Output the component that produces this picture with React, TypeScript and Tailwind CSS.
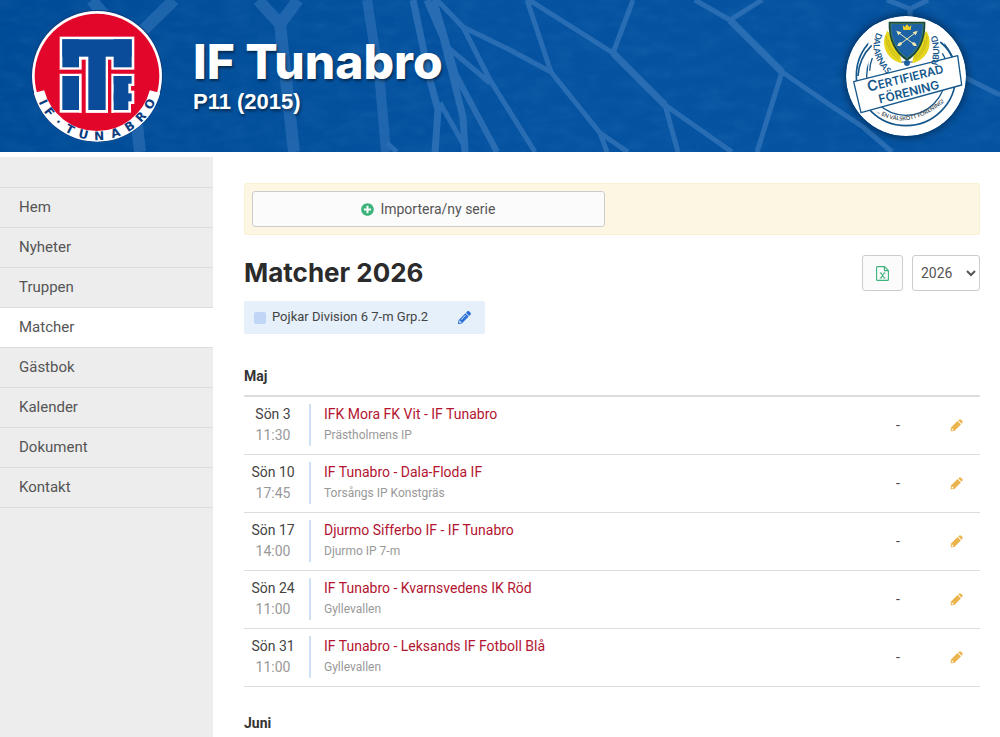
import { useState } from 'react';
import { FaPencilAlt, FaPlusCircle } from 'react-icons/fa';

const menu = ['Hem', 'Nyheter', 'Truppen', 'Matcher', 'Gästbok', 'Kalender', 'Dokument', 'Kontakt'];

const matches = [
  { day: 'Sön 3', time: '11:30', teams: 'IFK Mora FK Vit - IF Tunabro', place: 'Prästholmens IP' },
  { day: 'Sön 10', time: '17:45', teams: 'IF Tunabro - Dala-Floda IF', place: 'Torsångs IP Konstgräs' },
  { day: 'Sön 17', time: '14:00', teams: 'Djurmo Sifferbo IF - IF Tunabro', place: 'Djurmo IP 7-m' },
  { day: 'Sön 24', time: '11:00', teams: 'IF Tunabro - Kvarnsvedens IK Röd', place: 'Gyllevallen' },
  { day: 'Sön 31', time: '11:00', teams: 'IF Tunabro - Leksands IF Fotboll Blå', place: 'Gyllevallen' },
];

// Letters round the lower edge of the crest: [letter, rotation in degrees]
const crestLetters: [string, number][] = [
  ['I', 64], ['F', 53], ['·', 40], ['T', 27], ['U', 13], ['N', -2], ['A', -18], ['B', -33], ['R', -47], ['O', -62],
];

function NetBackground() {
  return (
    <svg className="absolute inset-0 h-full w-full" viewBox="0 0 1000 152" preserveAspectRatio="xMidYMid slice" aria-hidden="true">
      <defs>
        <linearGradient id="sky" x1="0" x2="1" y1="0" y2="0">
          <stop offset="0" stopColor="#004b96" />
          <stop offset="0.5" stopColor="#0452a0" />
          <stop offset="1" stopColor="#0452a0" />
        </linearGradient>
        <filter id="cloth" x="0" y="0" width="100%" height="100%">
          <feTurbulence type="fractalNoise" baseFrequency="0.04 0.09" numOctaves="3" seed="4" />
          <feColorMatrix values="0 0 0 0 0.2  0 0 0 0 0.5  0 0 0 0 0.8  0.9 0 0 0 -0.3" />
        </filter>
      </defs>
      <rect width="1000" height="152" fill="url(#sky)" />
      <rect width="1000" height="152" filter="url(#cloth)" opacity="0.15" />
      <g fill="none" stroke="#2f72b7" strokeLinejoin="round" opacity="0.85">
        <g strokeWidth="12" opacity="0.75">
          <path d="M92 0 128 45 140 152M174 0 128 45" />
          <path d="M258 0 280 24 286 80 294 152M298 0 280 24" />
          <path d="M367 0 380 83 386 152" strokeWidth="10" />
        </g>
        <g strokeWidth="7">
          <path d="M413 0 430 80 438 110 435 152" />
          <path d="M427 0 443 37 463 117 465 152" />
          <path d="M434 0 456 75 497 152" strokeWidth="6" />
          <path d="M387 143 397 152M440 103 465 147" strokeWidth="5" />
        </g>
        <g strokeWidth="5">
          <path d="M437 0 463 27 510 50 551 72 600 133 628 152M600 133 607 152" />
          <path d="M463 27 490 80 535 152M445 45 490 83" />
          <path d="M527 0 551 72M529 0 613 53 665 105 732 152M665 105 678 152M633 0 613 53" />
          <path d="M695 0 730 20 782 72 830 105 863 127 892 152M762 0 730 20M782 72 757 152" />
          <path d="M887 0 910 9 928 0M910 9 910 24M960 75 1000 95" />
        </g>
        <path d="M613 53 665 105M730 20 782 72" strokeWidth="7" />
      </g>
    </svg>
  );
}

function ClubCrest() {
  return (
    <svg className="h-[134px] w-[134px] shrink-0" viewBox="89 27 402 402" role="img" aria-label="IF Tunabro">
      <circle cx="290" cy="228" r="198" fill="#0d3c7e" />
      <circle cx="290" cy="228" r="195" fill="#fff" />
      <circle cx="290" cy="228" r="187" fill="#e3062b" />
      <path d="M116 275A180 180 0 0 0 464 275" fill="none" stroke="#fff" strokeWidth="32" />
      <g fill="#fff">
        <rect x="178" y="110" width="224" height="100" />
        <rect x="178" y="220" width="162" height="118" />
        <rect x="332" y="220" width="70" height="38" />
        <rect x="332" y="250" width="60" height="88" />
        <rect x="332" y="272" width="70" height="40" />
        <rect x="236" y="170" width="104" height="168" />
      </g>
      <g fill="#0a4c9a">
        <rect x="186" y="118" width="208" height="52" />
        <rect x="186" y="118" width="50" height="84" />
        <rect x="340" y="118" width="54" height="84" />
        <rect x="186" y="228" width="50" height="102" />
        <rect x="264" y="160" width="52" height="170" />
        <rect x="340" y="228" width="54" height="23" />
        <rect x="340" y="228" width="44" height="102" />
        <rect x="340" y="280" width="54" height="24" />
      </g>
      <g fill="#e3062b">
        <rect x="244" y="179" width="12" height="160" />
        <rect x="323" y="179" width="10" height="160" />
        <rect x="178" y="209" width="70" height="12" />
        <rect x="330" y="209" width="73" height="12" />
      </g>
      <g fill="#0d3c7e" fontFamily="'DejaVu Sans', sans-serif" fontWeight="700" fontSize="36" textAnchor="middle">
        {crestLetters.map(([letter, angle]) => (
          <text key={letter + angle} x="290" y="420" transform={`rotate(${angle} 290 228)`}>{letter}</text>
        ))}
      </g>
    </svg>
  );
}

function CertifiedBadge() {
  return (
    <svg className="h-[120px] w-[120px] shrink-0 rounded-full shadow-[0_0_10px_rgba(0,0,0,0.6)]" viewBox="77 48 360 360" role="img" aria-label="Certifierad förening">
      <defs>
        <path id="arc-left" d="M170 97Q136 160 212 236" />
        <path id="arc-right" d="M344 216Q372 150 338 76" />
        <path id="arc-bottom" d="M168 336Q262 402 384 296" />
      </defs>
      <circle cx="257" cy="228" r="180" fill="#fff" />
      <g fill="none" stroke="#16588c">
        <circle cx="257" cy="228" r="149" strokeWidth="5" />
        <circle cx="257" cy="228" r="118" strokeWidth="4" />
      </g>
      <path d="M144 72H372V196L144 230Z" fill="#fff" />
      <path d="M154 136A142 142 0 0 0 113 228M360 126A140 140 0 0 1 402 184" fill="none" stroke="#16588c" strokeWidth="5" />
      <path d="M156 174A110 110 0 0 0 148 212M366 160A100 100 0 0 1 376 180" fill="none" stroke="#16588c" strokeWidth="4" />
      <g fill="#e6d51f">
        <path d="M202 92C182 118 186 175 245 190L236 150Z" />
        <path d="M317 92C337 118 333 175 275 190L284 150Z" />
      </g>
      <path d="M198 108Q196 150 236 178M204 120Q208 152 240 172M320 108Q322 150 284 178M314 120Q312 152 280 172" fill="none" stroke="#b7ab17" strokeWidth="2" />
      <path d="M205 65H315Q318 145 260 183Q202 145 205 65Z" fill="#174a3c" />
      <path d="M211 71H309Q310 142 260 175Q210 142 211 71Z" fill="#1c62a4" stroke="#9db33a" strokeWidth="1" />
      <path d="M236 99 280 132M284 99 240 132" stroke="#f2e9b0" strokeWidth="3" />
      <path d="M228 92 243 97 234 106ZM292 92 277 97 286 106Z" fill="#f2e9b0" />
      <path d="M231 138Q234 124 245 128Q244 140 231 138ZM289 138Q286 124 275 128Q276 140 289 138Z" fill="#f2e9b0" />
      <path d="M247 75 253 81 260 73 267 81 273 75 271 90H249Z" fill="#f0cf28" />
      <circle cx="260" cy="189" r="9" fill="#1c62a4" />
      <path d="M244 186H276" stroke="#16588c" strokeWidth="3" />
      <path d="M100 245 412 167 424 255 122 338Z" fill="#fff" stroke="#16588c" strokeWidth="4" strokeLinejoin="round" />
      <g fill="#16588c" fontFamily="Lato, sans-serif" fontWeight="700">
        <text fontSize="26"><textPath href="#arc-left">DALARNAS</textPath></text>
        <text fontSize="26"><textPath href="#arc-right" startOffset="20">RBUND</textPath></text>
        <text fontSize="17" fill="#4a5560"><textPath href="#arc-bottom">... EN VÄLSKÖTT FÖRENING!</textPath></text>
        <g transform="rotate(-14 257 250)" textAnchor="middle" fontFamily="Inter, sans-serif" fontWeight="600">
          <text x="259" y="247" fontSize="35"><tspan fontSize="44">C</tspan>ERTIFIERAD</text>
          <text x="259" y="290" fontSize="36">FÖRENING</text>
        </g>
      </g>
    </svg>
  );
}

function ExcelIcon() {
  return (
    <svg className="h-[15px] w-[13px]" viewBox="0 0 13 15" fill="none" stroke="#3cb37a" strokeWidth="1.1" aria-hidden="true">
      <path d="M.6 1.3Q.6.6 1.3.6H8.4L12.4 4.6V13.7Q12.4 14.4 11.7 14.4H1.3Q.6 14.4.6 13.7ZM8.4.6V4.6H12.4" />
      <path d="M3.8 7H5.8M7.4 7H9.4M3.8 12H5.8M7.4 12H9.4M4.8 7 8.4 12M8.4 7 4.8 12" />
    </svg>
  );
}

function PencilIcon() {
  return (
    <svg className="h-[13px] w-[13px]" viewBox="0 0 16 16" fill="#ebb34b" aria-hidden="true">
      <path d="M.8 15.2 1.2 10.4 9.2 2.6 13.4 6.8 5.4 14.7Z" />
      <path d="M10.2 1.8 11.6.6Q12.6-.1 13.6.8L15.2 2.4Q16 3.4 15.3 4.4L14.3 5.8Z" />
      <path d="M2.4 11.4 4.6 13.6 2.6 14 2 13.4Z" fill="#fff" />
    </svg>
  );
}

export default function App() {
  const [year, setYear] = useState('2026');

  return (
    <div className="flex min-h-screen flex-col bg-white font-[Roboto,sans-serif] text-sm text-[#444]">
      <header className="relative overflow-hidden bg-[#0452a0]">
        <NetBackground />
        <div className="relative flex h-[152px] items-center pr-[34px] pl-[30px]">
          <ClubCrest />
          <div className="ml-[29px] flex-1 text-white [text-shadow:1px_2px_3px_rgba(0,0,0,0.5)]">
            <p className="font-[Inter,sans-serif] text-[48px] leading-[52px] font-extrabold">IF Tunabro</p>
            <p className="font-['Liberation_Sans',sans-serif] text-[22px] leading-7 font-bold">P11 (2015)</p>
          </div>
          <CertifiedBadge />
        </div>
      </header>

      <div className="flex flex-1 pt-[5px]">
        <nav className="w-[213px] shrink-0 bg-[#ededed] pt-[30px]">
          <ul className="border-t border-[#dcdcdc]">
            {menu.map((item) => (
              <li key={item} className={item === 'Matcher' ? 'border-b border-[#dcdcdc] bg-white' : 'border-b border-[#dcdcdc]'}>
                <a href="#" className="block px-[19px] py-2 text-[15px] leading-[23px] text-[#555] hover:bg-white">{item}</a>
              </li>
            ))}
          </ul>
        </nav>

        <main className="min-w-0 flex-1 pt-[26px] pr-5 pl-[31px]">
          <div className="rounded-[3px] border border-[#faf0d3] bg-[#fdf6e3] p-[7px]">
            <button type="button" className="flex h-9 w-[49%] items-center justify-center gap-[6px] rounded-[3px] border border-[#ccc] bg-[#fbfbfb] text-[#555]">
              <FaPlusCircle className="text-[13px] text-[#3cb37a]" />
              Importera/ny serie
            </button>
          </div>

          <div className="mt-5 flex items-center">
            <h1 className="flex-1 font-[Inter,sans-serif] text-[26px] leading-9 font-bold text-[#2b2b2b]">Matcher {year}</h1>
            <button type="button" aria-label="Exportera till Excel" className="flex h-9 w-[41px] items-center justify-center rounded-[3px] border border-[#ccc] bg-[#fbfbfb]">
              <ExcelIcon />
            </button>
            <select
              aria-label="År"
              value={year}
              onChange={(e) => setYear(e.target.value)}
              className="ml-[9px] h-9 w-[68px] rounded-[3px] border border-[#ccc] bg-white pl-1 text-sm text-[#555]"
            >
              <option>2026</option>
              <option>2025</option>
            </select>
          </div>

          <div className="mt-[10px] flex h-[33px] w-[241px] items-center rounded-[2px] bg-[#e6f0fb] px-[10px] text-[13px]">
            <span className="mr-[6px] h-3 w-3 rounded-[2px] bg-[#bfd6f6]" />
            <span className="flex-1">Pojkar Division 6 7-m Grp.2</span>
            <button type="button" aria-label="Redigera serie" className="mr-1">
              <FaPencilAlt className="text-[13px] text-[#2a6fd6]" />
            </button>
          </div>

          <section className="mt-[30px]">
            <h2 className="mb-[7px] leading-6 font-bold text-[#333]">Maj</h2>
            <table className="w-full border-t-2 border-[#ddd]">
              <tbody>
                {matches.map((match) => (
                  <tr key={match.day} className="h-[58px] border-b border-[#ddd]">
                    <td className="w-[67px]">
                      <div className="border-r-2 border-[#cfe0f5] pr-[7px] text-center leading-[21px]">
                        <div className="text-[#444]">{match.day}</div>
                        <div className="text-[#999]">{match.time}</div>
                      </div>
                    </td>
                    <td className="pl-[13px] leading-[21px]">
                      <a href="#" className="block text-[#b3142f] hover:underline">{match.teams}</a>
                      <div className="text-xs leading-[21px] text-[#999]">{match.place}</div>
                    </td>
                    <td className="w-[72px] text-center">-</td>
                    <td className="w-[46px]">
                      <button type="button" aria-label={`Redigera ${match.teams}`} className="ml-4 block">
                        <PencilIcon />
                      </button>
                    </td>
                  </tr>
                ))}
              </tbody>
            </table>
          </section>

          <section className="mt-6">
            <h2 className="leading-6 font-bold text-[#333]">Juni</h2>
          </section>
        </main>
      </div>
    </div>
  );
}
